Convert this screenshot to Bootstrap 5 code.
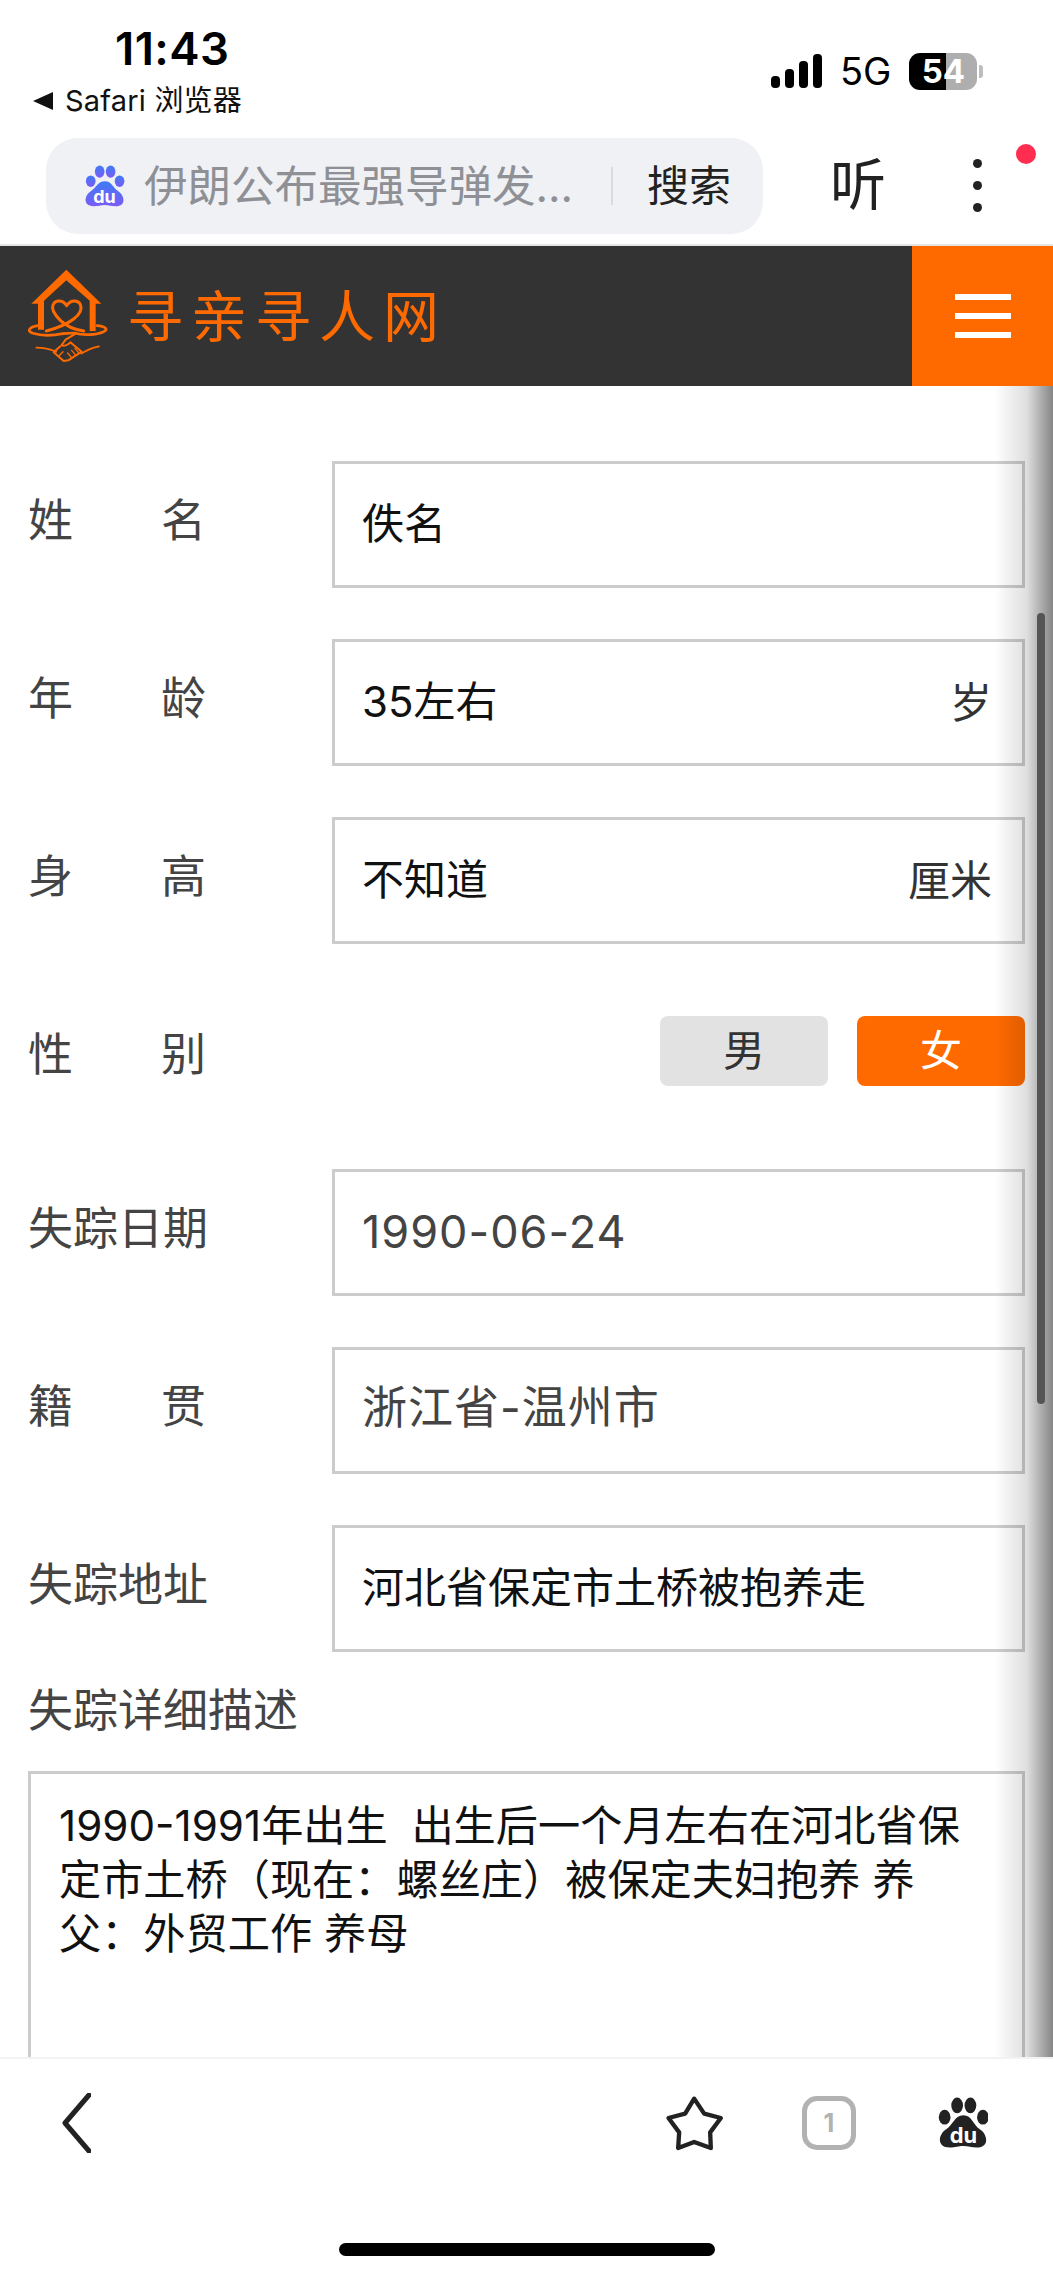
<!DOCTYPE html>
<html lang="zh-CN">
<head>
<meta charset="utf-8">
<title>寻亲寻人网</title>
<link href="https://cdn.jsdelivr.net/npm/bootstrap@5.3.0/dist/css/bootstrap.min.css" rel="stylesheet">
<style>
html,body{margin:0;background:#fff}
body{width:1053px;height:2279px;overflow:hidden;font-family:Inter,"Noto Sans CJK SC",sans-serif;color:#222}
.status-area{height:138px;padding:24px 0 0 33px}
.time-text{font-size:45.5px;font-weight:600;line-height:50px;color:#000;margin:0 0 0 82px;letter-spacing:.4px}
.app-back{font-size:29px;line-height:36px;color:#111;margin-top:9px;gap:12px;letter-spacing:.2px}
.app-tri{width:0;height:0;border-style:solid;border-width:9px 20px 9px 0;border-color:transparent #111 transparent transparent}
.status-right{position:absolute;left:771px;top:52px;gap:18px;height:38px}
.sig-bars{gap:5px;height:34px}
.sig-bars i{display:block;width:9px;background:#000;border-radius:4px}
.net-text{font-size:38px;line-height:38px;color:#000;font-weight:400}
.batt-box{width:68px;height:37px;border-radius:11px;background:linear-gradient(90deg,#000 54%,#aeaeae 54%);color:#fff;font-size:33px;font-weight:700;line-height:37px;text-align:center}
.batt-nub{width:4px;height:13px;background:#bdbdbd;border-radius:0 3px 3px 0;margin-left:2px}
.search-area{height:108px;border-bottom:2px solid #e4e4e4;padding:0 0 12px 46px;position:relative}
.search-pill{width:717px;height:96px;background:#f0f1f4;border-radius:32px;padding:0 32px 0 38px}
.search-hint{font-size:43.5px;line-height:60px;color:#8e9096;margin-left:19px;flex:1;white-space:nowrap}
.search-sep{width:2px;height:38px;background:#d9dadd;margin:0 34px 0 0}
.search-go{font-size:42px;line-height:60px;color:#222}
.listen-text{font-size:56px;line-height:70px;color:#222;margin-left:67px}
.dots-wrap{margin-left:87px;gap:13px}
.dots-wrap i{display:block;width:9px;height:9px;border-radius:50%;background:#222}
.red-dot{position:absolute;left:1016px;top:6px;width:20px;height:20px;border-radius:50%;background:#ff2d4f}
.site-head{height:140px;background:#333}
.brand-wrap{padding-left:28px;gap:19px}
.brand-name{font-size:56px;letter-spacing:8px;color:#ff6a00;line-height:70px;font-family:"Noto Sans CJK SC",sans-serif;font-weight:400;margin-bottom:6px}
.menu-tile{width:141px;background:#ff6a00;gap:13px;padding-left:0}
.menu-tile i{display:block;width:56px;height:6px;background:#fff}
.form-pane{height:1671px;padding:75px 28px 0;position:relative;overflow:hidden}
.shade-edge{position:absolute;top:0;right:0;bottom:0;width:58px;pointer-events:none;background:linear-gradient(90deg,rgba(0,0,0,0),rgba(0,0,0,.13) 55%,rgba(0,0,0,.31) 78%,rgba(0,0,0,.48))}
.scroll-thumb{position:absolute;left:1037px;top:227px;width:8px;height:791px;background:#555;border-radius:4px}
.form-line{margin-bottom:51px}
.form-name{width:304px;flex:none;padding-top:29px;font-size:45px;line-height:62px;color:#444}
.name-inner{width:178px}
.field-box{flex:1;height:127px;border:3px solid #ccc;padding:0 30px 0 27px;background:#fff}
.field-box .form-control{border:0;border-radius:0;padding:0 0 9px;background:transparent;box-shadow:none;font-size:42px;line-height:54px;color:#111;height:60px;font-family:inherit}
.field-box .form-control.dim-val{color:#444;font-size:45px;letter-spacing:1px;padding-bottom:12px}
.field-box .form-control.date-val{padding-bottom:2px}
.field-unit{font-size:42px;color:#333;white-space:nowrap}
.sex-line{height:123px;padding-top:21px}
.sex-btn{width:168px;height:70px;padding:0;border:0;border-radius:8px;font-size:42px;line-height:70px}
.sex-off{background:#e2e2e2;color:#333}
.sex-on{background:#ff6a00;color:#fff}
.desc-name{font-size:45px;line-height:62px;color:#444;margin:-23px 0 29px}
.desc-box.form-control{height:400px;border:3px solid #ccc;border-radius:0;padding:25px 28px;font-size:42.2px;line-height:54px;color:#111;font-family:inherit;resize:none;box-shadow:none;overflow:hidden}
.foot-bar{height:222px;border-top:2px solid #f3f3f3;background:#fff}
.foot-row{height:128px;padding:0 65px 0 62px}
.tab-count{width:54px;height:54px;border:5px solid #b2b2b2;border-radius:15px;color:#b2b2b2;font-size:25px;font-weight:700;line-height:1;margin:0 82px 0 76px}
.home-pill{width:376px;height:13px;background:#000;border-radius:7px;margin:56px 0 0 339px}
</style>
</head>
<body>
<header class="status-area position-relative">
  <div class="time-text">11:43</div>
  <div class="app-back d-flex align-items-center"><span class="app-tri"></span><span>Safari 浏览器</span></div>
  <div class="status-right position-absolute d-flex align-items-center">
    <div class="sig-bars d-flex align-items-end"><i style="height:12px"></i><i style="height:19px"></i><i style="height:27px"></i><i style="height:34px"></i></div>
    <div class="net-text">5G</div>
    <div class="d-flex align-items-center"><div class="batt-box">54</div><div class="batt-nub"></div></div>
  </div>
</header>

<div class="search-area d-flex align-items-start">
  <div class="search-pill d-flex align-items-center">
    <svg width="41" height="42" viewBox="245 105 128 130" aria-hidden="true">
      <defs><linearGradient id="pawg" x1="0" y1="0" x2="0" y2="1"><stop offset="0" stop-color="#3e7bf5"/><stop offset="1" stop-color="#7a5cf6"/></linearGradient></defs>
      <g fill="url(#pawg)"><ellipse cx="266" cy="155" rx="15" ry="18"/><ellipse cx="294" cy="125" rx="15" ry="19"/><ellipse cx="328" cy="125" rx="15" ry="19"/><ellipse cx="356" cy="155" rx="15" ry="18"/>
      <path d="M310 155C288 155 283 175 266 186C246 198 240 233 275 233C290 233 297 229 310 229C323 229 330 233 344 233C378 233 372 198 352 186C335 175 332 155 310 155Z"/></g>
      <text x="309" y="222" text-anchor="middle" font-size="56" font-weight="700" fill="#fff" font-family="Inter, sans-serif">du</text>
    </svg>
    <span class="search-hint">伊朗公布最强导弹发...</span>
    <span class="search-sep"></span>
    <span class="search-go">搜索</span>
  </div>
  <span class="listen-text align-self-center">听</span>
  <div class="dots-wrap d-flex flex-column align-self-center"><i></i><i></i><i></i></div>
  <span class="red-dot"></span>
</div>

<nav class="site-head d-flex justify-content-between">
  <div class="brand-wrap d-flex align-items-center">
    <svg width="80" height="94" viewBox="85 118 240 282" aria-hidden="true">
      <g fill="#ff6a00"><path d="M200 120L305 222H288V304H270V213L200 152L133 213V300H115V222H95Z"/></g>
      <g fill="none" stroke="#ff6a00" stroke-linecap="round" stroke-linejoin="round">
        <path stroke-width="9" d="M140 304C170 296 196 288 222 268C240 254 248 238 242 224C236 212 214 208 201 228C188 208 166 212 160 226C154 240 166 256 182 272C194 284 216 298 252 304"/>
        <path stroke-width="8" d="M115 288C88 292 80 304 100 311C125 319 160 318 190 312L225 310C250 318 290 316 312 306C328 298 316 290 292 288"/>
        <path stroke-width="5" d="M110 354C130 354 150 358 170 366M298 350C280 354 262 360 245 372"/>
        <path stroke-width="6" d="M228 312L198 330L186 346C192 352 204 346 212 338L246 366L206 392L192 394L162 368L182 350"/>
        <path stroke-width="4" d="M214 382L204 370M226 374L216 362M236 368L226 356M178 378L190 366"/>
      </g>
    </svg>
    <span class="brand-name">寻亲寻人网</span>
  </div>
  <div class="menu-tile d-flex flex-column align-items-center justify-content-center"><i></i><i></i><i></i></div>
</nav>

<main class="form-pane">
  <form>
    <div class="form-line d-flex">
      <label class="form-name"><span class="name-inner d-flex justify-content-between"><span>姓</span><span>名</span></span></label>
      <div class="field-box d-flex align-items-center"><input class="form-control" type="text" value="佚名"></div>
    </div>
    <div class="form-line d-flex">
      <label class="form-name"><span class="name-inner d-flex justify-content-between"><span>年</span><span>龄</span></span></label>
      <div class="field-box d-flex align-items-center"><input class="form-control" type="text" value="35左右"><span class="field-unit">岁</span></div>
    </div>
    <div class="form-line d-flex">
      <label class="form-name"><span class="name-inner d-flex justify-content-between"><span>身</span><span>高</span></span></label>
      <div class="field-box d-flex align-items-center"><input class="form-control" type="text" value="不知道"><span class="field-unit">厘米</span></div>
    </div>
    <div class="form-line d-flex sex-line">
      <label class="form-name flex-grow-1" style="margin-top:-21px"><span class="name-inner d-flex justify-content-between"><span>性</span><span>别</span></span></label>
      <div class="d-flex gap-0 align-items-start">
        <button type="button" class="btn sex-btn sex-off">男</button>
        <button type="button" class="btn sex-btn sex-on" style="margin-left:29px">女</button>
      </div>
    </div>
    <div class="form-line d-flex">
      <label class="form-name">失踪日期</label>
      <div class="field-box d-flex align-items-center"><input class="form-control dim-val date-val" type="text" value="1990-06-24" readonly></div>
    </div>
    <div class="form-line d-flex">
      <label class="form-name"><span class="name-inner d-flex justify-content-between"><span>籍</span><span>贯</span></span></label>
      <div class="field-box d-flex align-items-center"><input class="form-control dim-val" type="text" value="浙江省-温州市" readonly></div>
    </div>
    <div class="form-line d-flex">
      <label class="form-name">失踪地址</label>
      <div class="field-box d-flex align-items-center"><input class="form-control" type="text" value="河北省保定市土桥被抱养走"></div>
    </div>
    <div class="desc-name">失踪详细描述</div>
    <textarea class="form-control desc-box">1990-1991年出生  出生后一个月左右在河北省保定市土桥（现在：螺丝庄）被保定夫妇抱养 养父：外贸工作 养母</textarea>
  </form>
  <div class="shade-edge"></div>
  <div class="scroll-thumb"></div>
</main>

<footer class="foot-bar">
  <div class="foot-row d-flex align-items-center">
    <svg width="29" height="60" viewBox="0 0 29 60" aria-hidden="true"><polyline points="27,2 3,30 27,58" fill="none" stroke="#222" stroke-width="5" stroke-linecap="round" stroke-linejoin="round"/></svg>
    <svg class="ms-auto" width="62" height="60" viewBox="70 30 185 180" aria-hidden="true"><path d="M160 47L190 92L240 105L208 148L210 195L160 177L112 195L115 148L83 105L133 92Z" fill="none" stroke="#222" stroke-width="13" stroke-linejoin="round"/></svg>
    <div class="tab-count d-flex align-items-center justify-content-center">1</div>
    <svg width="50" height="54" viewBox="245 105 128 130" aria-hidden="true">
      <g fill="#222"><ellipse cx="262" cy="155" rx="15" ry="19"/><ellipse cx="294" cy="125" rx="15" ry="20"/><ellipse cx="328" cy="125" rx="15" ry="20"/><ellipse cx="360" cy="155" rx="15" ry="19"/>
      <path d="M310 150C288 150 283 175 266 186C246 198 240 233 275 233C290 233 297 229 310 229C323 229 330 233 344 233C378 233 372 198 352 186C335 175 332 150 310 150Z"/></g>
      <text x="310" y="220" text-anchor="middle" font-size="56" font-weight="700" fill="#fff" font-family="Inter, sans-serif">du</text>
    </svg>
  </div>
  <div class="home-pill"></div>
</footer>
</body>
</html>
